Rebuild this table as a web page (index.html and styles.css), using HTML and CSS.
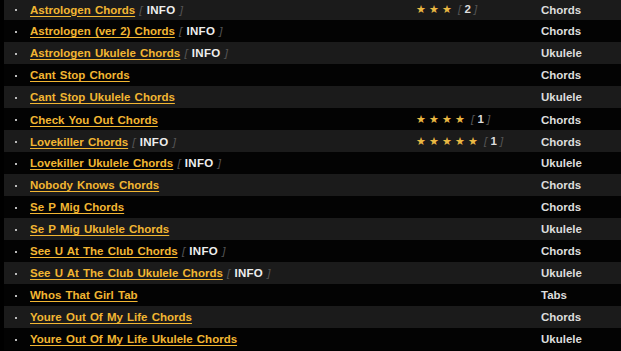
FILE: index.html
```html
<!DOCTYPE html>
<html>
<head>
<meta charset="utf-8">
<link rel="stylesheet" href="styles.css">
</head>
<body>
<div class="list">
  <div class="row alt"><span class="dot"></span><div class="title"><a href="#">Astrologen Chords</a> <span class="br">[</span> <span class="info">INFO</span> <span class="br">]</span></div><div class="rating"><span class="stars"><i>★</i><i>★</i><i>★</i></span><span class="br">[</span> <span class="num">2</span> <span class="br">]</span></div><div class="type">Chords</div></div>
  <div class="row"><span class="dot"></span><div class="title"><a href="#">Astrologen (ver 2) Chords</a> <span class="br">[</span> <span class="info">INFO</span> <span class="br">]</span></div><div class="rating"></div><div class="type">Chords</div></div>
  <div class="row alt"><span class="dot"></span><div class="title"><a href="#">Astrologen Ukulele Chords</a> <span class="br">[</span> <span class="info">INFO</span> <span class="br">]</span></div><div class="rating"></div><div class="type">Ukulele</div></div>
  <div class="row"><span class="dot"></span><div class="title"><a href="#">Cant Stop Chords</a></div><div class="rating"></div><div class="type">Chords</div></div>
  <div class="row alt"><span class="dot"></span><div class="title"><a href="#">Cant Stop Ukulele Chords</a></div><div class="rating"></div><div class="type">Ukulele</div></div>
  <div class="row"><span class="dot"></span><div class="title"><a href="#">Check You Out Chords</a></div><div class="rating"><span class="stars"><i>★</i><i>★</i><i>★</i><i>★</i></span><span class="br">[</span> <span class="num">1</span> <span class="br">]</span></div><div class="type">Chords</div></div>
  <div class="row alt"><span class="dot"></span><div class="title"><a href="#">Lovekiller Chords</a> <span class="br">[</span> <span class="info">INFO</span> <span class="br">]</span></div><div class="rating"><span class="stars"><i>★</i><i>★</i><i>★</i><i>★</i><i>★</i></span><span class="br">[</span> <span class="num">1</span> <span class="br">]</span></div><div class="type">Chords</div></div>
  <div class="row"><span class="dot"></span><div class="title"><a href="#">Lovekiller Ukulele Chords</a> <span class="br">[</span> <span class="info">INFO</span> <span class="br">]</span></div><div class="rating"></div><div class="type">Ukulele</div></div>
  <div class="row alt"><span class="dot"></span><div class="title"><a href="#">Nobody Knows Chords</a></div><div class="rating"></div><div class="type">Chords</div></div>
  <div class="row"><span class="dot"></span><div class="title"><a href="#">Se P Mig Chords</a></div><div class="rating"></div><div class="type">Chords</div></div>
  <div class="row alt"><span class="dot"></span><div class="title"><a href="#">Se P Mig Ukulele Chords</a></div><div class="rating"></div><div class="type">Ukulele</div></div>
  <div class="row"><span class="dot"></span><div class="title"><a href="#">See U At The Club Chords</a> <span class="br">[</span> <span class="info">INFO</span> <span class="br">]</span></div><div class="rating"></div><div class="type">Chords</div></div>
  <div class="row alt"><span class="dot"></span><div class="title"><a href="#">See U At The Club Ukulele Chords</a> <span class="br">[</span> <span class="info">INFO</span> <span class="br">]</span></div><div class="rating"></div><div class="type">Ukulele</div></div>
  <div class="row"><span class="dot"></span><div class="title"><a href="#">Whos That Girl Tab</a></div><div class="rating"></div><div class="type">Tabs</div></div>
  <div class="row alt"><span class="dot"></span><div class="title"><a href="#">Youre Out Of My Life Chords</a></div><div class="rating"></div><div class="type">Chords</div></div>
  <div class="row"><span class="dot"></span><div class="title"><a href="#">Youre Out Of My Life Ukulele Chords</a></div><div class="rating"></div><div class="type">Ukulele</div></div>
</div>
</body>
</html>
```

FILE: styles.css
```css
html, body {
  margin: 0;
  padding: 0;
  background: #000;
  overflow: hidden;
}
body {
  font-family: "Liberation Sans", Arial, sans-serif;
  font-size: 11.5px;
  font-weight: bold;
  color: #ddd;
}
.list {
  margin-top: -2px;
  padding-left: 4px;
  width: 640px;
}
.row {
  display: grid;
  grid-template-columns: 26px 386px 125px 1fr;
  align-items: center;
  height: 22px;
  line-height: 22px;
  background: #030303;
  white-space: nowrap;
}
.row.alt {
  background: #1b1b1b;
}
.dot {
  display: block;
  width: 2px;
  height: 2px;
  background: #bbb;
  margin-left: 11px;
  margin-top: 1px;
}
.title {
  word-spacing: 1px;
}
.title a {
  color: #f2b632;
  text-decoration: underline;
  text-underline-offset: 2px;
}
.br {
  color: #555;
  font-style: italic;
  font-weight: normal;
}
.info {
  color: #eee;
  letter-spacing: 0.3px;
}
.num {
  color: #ddd;
}
.stars {
  display: inline-block;
  margin-right: 3px;
}
.stars i {
  display: inline-block;
  width: 13px;
  font-style: normal;
  font-family: "DejaVu Sans", sans-serif;
  font-size: 11px;
  color: #e9b843;
}
.type {
  color: #ddd;
}
```
